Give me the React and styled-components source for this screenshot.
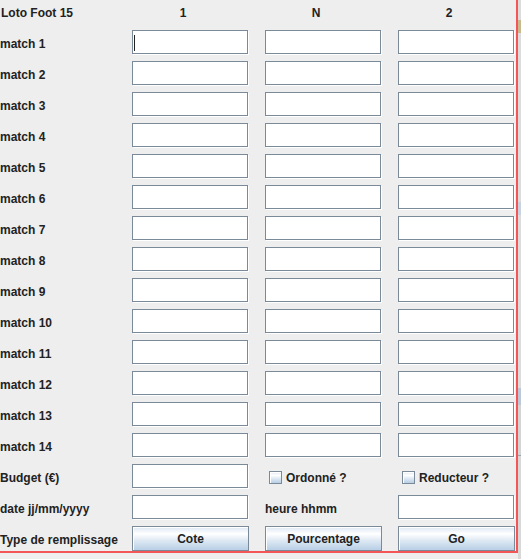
import React from "react"
import styled, { createGlobalStyle, css } from "styled-components"

const GlobalStyle = createGlobalStyle`
  html, body {
    margin: 0;
    padding: 0;
    background: #eeeeee;
    font-family: "Liberation Sans", Arial, sans-serif;
  }
`

const Page = styled.div`
  display: flex;
  align-items: flex-start;
  width: 521px;
  height: 559px;
  overflow: hidden;
`

const Panel = styled.div`
  display: flex;
  flex-direction: column;
  gap: 6px;
  flex: none;
  width: 515px;
  padding-right: 1px;
  background: #eeeeee;
  border-right: 2px solid #f25656;
  border-bottom: 2px solid #f25656;
`

const Row = styled.div`
  display: grid;
  grid-template-columns: 116px 117px 117px 117px;
  column-gap: 16px;
  height: ${(p) => (p.$head ? 24 : 25)}px;
`

/* bits of the window behind, peeking out on the right */
const Backdrop = styled.div`
  flex: 1;
  align-self: stretch;
  background: linear-gradient(
    to bottom,
    #dcdcdc 0px,
    #dcdcdc 20px,
    #c9b98f 20px,
    #c9b98f 33px,
    #dcdcdc 33px,
    #dcdcdc 202px,
    #c8d2e0 202px,
    #c8d2e0 215px,
    #dcdcdc 215px,
    #dcdcdc 388px,
    #bcc8d8 388px,
    #bcc8d8 405px,
    #d4d4d4 405px,
    #d4d4d4 455px,
    #9aa4b0 455px,
    #9aa4b0 456px,
    #d8d8d8 456px
  );
`

const textStyle = css`
  font-family: "Liberation Sans", Arial, sans-serif;
  font-weight: bold;
  font-size: 12px;
  color: #222222;
  white-space: nowrap;
`

const Label = styled.div`
  ${textStyle};
  display: flex;
  align-items: center;
  min-width: 0;
  padding-top: 2px;
  padding-left: ${(p) => (p.$inset ? 1 : 0)}px;
`

const Heading = styled.div`
  ${textStyle};
  display: flex;
  align-items: center;
  justify-content: center;
  padding-right: 15px;
  padding-top: 2px;
`

const Field = styled.div`
  position: relative;
  width: 116px;
  height: 24px;
  box-sizing: border-box;
  background: #ffffff;
  border: 1px solid #7a8a99;
  box-shadow: 1px 1px 0 #ffffff;

  ${(p) =>
    p.$focused &&
    css`
      &::before {
        content: "";
        position: absolute;
        left: 1px;
        top: 4px;
        width: 1px;
        height: 16px;
        background: #222;
      }
    `}
`

const oceanGradient = css`
  background: linear-gradient(
    to bottom,
    #dde8f3 0%,
    #ffffff 30%,
    #dde8f3 60%,
    #b8cfe5 100%
  );
`

const Button = styled.button`
  ${textStyle};
  ${oceanGradient};
  margin: 0;
  padding: 1px 0 0;
  width: 117px;
  height: 25px;
  box-sizing: border-box;
  border: 1px solid #7a8a99;
  box-shadow: inset 1px 1px 0 #ffffff;
  cursor: default;
`

const Check = styled.label`
  ${textStyle};
  display: flex;
  align-items: center;
  gap: 4px;
  padding-left: 4px;
  padding-top: 2px;
`

const Box = styled.span`
  ${oceanGradient};
  width: 13px;
  height: 13px;
  box-sizing: border-box;
  border: 1px solid #7a8a99;
  box-shadow: inset 1px 1px 0 #ffffff;
`

const matches = Array.from({ length: 14 }, (_, i) => `match ${i + 1}`)

export default function App() {
  return (
    <>
      <GlobalStyle />
      <Page>
        <Panel>
          <Row $head>
            <Label $inset>Loto Foot 15</Label>
            <Heading>1</Heading>
            <Heading>N</Heading>
            <Heading>2</Heading>
          </Row>

          {matches.map((m, i) => (
            <Row key={m}>
              <Label>{m}</Label>
              <Field $focused={i === 0} />
              <Field />
              <Field />
            </Row>
          ))}

          <Row>
            <Label>Budget (€)</Label>
            <Field />
            <Check>
              <Box />
              Ordonné ?
            </Check>
            <Check>
              <Box />
              Reducteur ?
            </Check>
          </Row>

          <Row>
            <Label>date jj/mm/yyyy</Label>
            <Field />
            <Label>heure hhmm</Label>
            <Field />
          </Row>

          <Row>
            <Label>Type de remplissage</Label>
            <Button>Cote</Button>
            <Button>Pourcentage</Button>
            <Button>Go</Button>
          </Row>
        </Panel>
        <Backdrop />
      </Page>
    </>
  )
}
